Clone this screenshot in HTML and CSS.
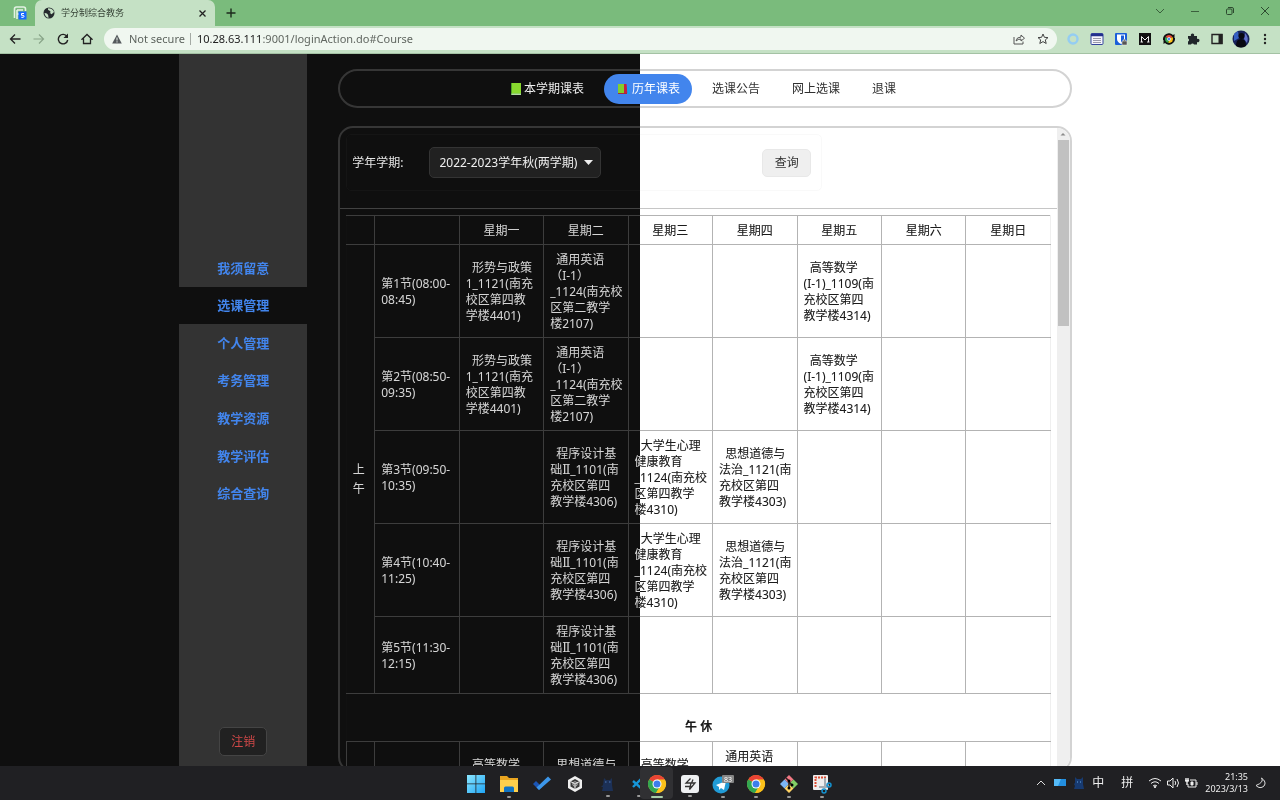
FILE: index.html
```html
<!DOCTYPE html>
<html lang="zh-CN">
<head>
<meta charset="utf-8">
<title>学分制综合教务</title>
<link rel="stylesheet" href="styles.css">
</head>
<body>
<header class="browser">
  <div class="tabstrip">
    <svg class="tab-group" width="14" height="14" viewBox="0 0 14 14"><path d="M1.500 12V3q0-2 2-2h7q2 0 2 2v2M4 4h6M4 4v9M4 8h3" fill="none" stroke="#e3f2e3" stroke-width="1.600"/><rect x="5.500" y="5.500" width="8" height="8" fill="#1769ff"/><path d="M11 7.500H8.500v1.800H10q1 0 1 1t-1 1H8.300" fill="none" stroke="#fff"/></svg>
    <div class="tab">
      <svg width="12" height="12" viewBox="0 0 12 12"><circle cx="6" cy="6" r="5.500" fill="#252a2e"/><path d="M1.500 6q2 0 3 1t1 4Q2 10 1.500 6M5 1.200q-.5 2 1 2.300T7.500 5 6 6q2 0 2 1t3-2Q10 1.500 5 1.200" fill="#c6e2c6"/></svg>
      <span class="tab-title">学分制综合教务</span>
      <button class="icon-btn" aria-label="Close tab"><svg width="9" height="9" viewBox="0 0 9 9"><path d="M1.500 1.500l6 6m0-6l-6 6" stroke="#222" stroke-width="1.300"/></svg></button>
    </div>
    <button class="icon-btn new-tab" aria-label="New tab"><svg width="10" height="10" viewBox="0 0 10 10"><path d="M5 .5v9M.5 5h9" stroke="#1c2a1c" stroke-width="1.400"/></svg></button>
    <div class="win-controls">
      <button class="icon-btn" aria-label="Search tabs"><svg width="10" height="10" viewBox="0 0 10 10"><path d="M1 3l4 4 4-4" fill="none" stroke="#3b5f3d"/></svg></button>
      <button class="icon-btn" aria-label="Minimize"><svg width="10" height="10" viewBox="0 0 10 10"><path d="M1 5.500h8" stroke="#3b5f3d"/></svg></button>
      <button class="icon-btn" aria-label="Restore"><svg width="10" height="10" viewBox="0 0 10 10"><rect x="1.500" y="3" width="5.500" height="5.500" rx="1" fill="none" stroke="#2d4a2f"/><path d="M3 1.500h4q1.500 0 1.500 1.500v4" fill="none" stroke="#2d4a2f"/></svg></button>
      <button class="icon-btn" aria-label="Close"><svg width="10" height="10" viewBox="0 0 10 10"><path d="M1 1l8 8m0-8L1 9" stroke="#2d4a2f"/></svg></button>
    </div>
  </div>
  <div class="toolbar">
    <div class="nav-buttons">
      <button class="icon-btn" aria-label="Back"><svg width="12" height="12" viewBox="0 0 12 12"><path d="M11.500 6H1.500M6 1.500L1.500 6 6 10.500" fill="none" stroke="#222" stroke-width="1.300"/></svg></button>
      <button class="icon-btn" aria-label="Forward"><svg width="12" height="12" viewBox="0 0 12 12"><path d="M.5 6h10M6 1.500L10.500 6 6 10.500" fill="none" stroke="#88a488" stroke-width="1.200"/></svg></button>
      <button class="icon-btn" aria-label="Reload"><svg width="12" height="12" viewBox="0 0 12 12"><path d="M10 3.500A4.700 4.700 0 1 0 10.700 7" fill="none" stroke="#222" stroke-width="1.400"/><path d="M11 .5V5H6.500z" fill="#222"/></svg></button>
      <button class="icon-btn" aria-label="Home"><svg width="12" height="12" viewBox="0 0 12 12"><path d="M1 6.200L6 1.500l5 4.700H9.500v4.300h-7V6.200z" fill="none" stroke="#222" stroke-width="1.300"/></svg></button>
    </div>
    <div class="address">
      <svg width="10" height="10" viewBox="0 0 10 10"><path d="M5 .5L9.800 9.500H.2z" fill="#54595c"/><path d="M5 3.500v3M5 7.300v1.200" stroke="#f0f7f0"/></svg>
      <span class="secure">Not secure</span>
      <span class="url">10.28.63.111<span>:9001/loginAction.do#Course</span></span>
      <button class="icon-btn" aria-label="Share"><svg width="12" height="12" viewBox="0 0 12 12"><path d="M1 4v7h9V8.500M3 8q.5-4 5-4V2l3.500 3.200L8 8V6Q5 6 3 8z" fill="none" stroke="#555"/></svg></button>
      <button class="icon-btn" aria-label="Bookmark"><svg width="12" height="12" viewBox="0 0 12 12"><path d="M6 1l1.400 3.300 3.600.3-2.700 2.300.9 3.600L6 8.600l-3.200 1.900.9-3.600L1 4.600l3.600-.3z" fill="none" stroke="#444"/></svg></button>
    </div>
    <div class="extensions">
      <svg width="14" height="14" viewBox="0 0 14 14"><circle cx="7" cy="7" r="4.500" fill="none" stroke="#94cdf2" stroke-width="2.400"/></svg>
      <svg width="14" height="14" viewBox="0 0 14 14"><rect x="1" y="1.500" width="12" height="11" rx="1" fill="#f5f5fc" stroke="#35459d"/><path d="M1 3h12" stroke="#23308d" stroke-width="2.500"/><path d="M3 6.500h8M3 8.500h8M3 10.500h8" stroke="#99a"/></svg>
      <svg width="14" height="14" viewBox="0 0 14 14"><rect x="1" y="1" width="12" height="12" rx="1" fill="#1b5fd9"/><path d="M3 2.500h8V7q0 3-4 5-4-2-4-5z" fill="#fff"/><path d="M7 3.500h3V7q0 2-3 3.500z" fill="#1b5fd9"/><path d="M8 9h5v4H8zM9.200 9V8q1.300-1.500 2.600 0v1" fill="#555" stroke="#eee" stroke-width=".5"/></svg>
      <svg width="14" height="14" viewBox="0 0 14 14"><rect x="1" y="1" width="12" height="12" fill="#111"/><path d="M3.500 10V4.500L7 8l3.500-3.500V10M2.500 10h2.500M9 10h2.500" fill="none" stroke="#eee"/></svg>
      <svg width="14" height="14" viewBox="0 0 14 14"><path d="M1 8a6 6 0 0 1 10-5l1.500-1V7M13 6a6 6 0 0 1-10 5l-1.500 1V7" fill="#111"/><circle cx="7" cy="7" r="5.200" fill="#111"/><path d="M7 7L3.500 5a4 4 0 0 1 7 0z" fill="#e84537"/><path d="M7 7L3.500 5A4 4 0 0 0 6.500 11z" fill="#35a852"/><path d="M7 7l3.500-2a4 4 0 0 1-4 6z" fill="#fbc116"/><circle cx="7" cy="7" r="1.600" fill="#4285f4" stroke="#fff" stroke-width=".6"/></svg>
      <svg width="14" height="14" viewBox="0 0 14 14"><path d="M2 4h3a1.700 1.700 0 1 1 3 0h3v3a1.700 1.700 0 1 1 0 3v2.500H8a1.600 1.600 0 0 0-3 0H2v-3a1.600 1.600 0 0 0 0-3z" fill="#20262a"/></svg>
      <svg width="14" height="14" viewBox="0 0 14 14"><path d="M2 2.500h10v9H2z" fill="none" stroke="#222" stroke-width="1.400"/><path d="M8.500 2h4v10h-4z" fill="#222"/></svg>
      <svg width="18" height="18" viewBox="0 0 18 18"><circle cx="9" cy="9" r="8.500" fill="#172258"/><path d="M2 4l4-3 1 7-5 3z" fill="#355fc1"/><path d="M13 3q4 4 2 10l-3-4z" fill="#6272c9"/><circle cx="9.500" cy="6" r="3" fill="#080912"/><path d="M4 16q0-7 5-7t5 7q-5 3-10 0" fill="#080912"/></svg>
      <svg width="14" height="14" viewBox="0 0 14 14" fill="#222"><circle cx="7" cy="3" r="1.200"/><circle cx="7" cy="7" r="1.200"/><circle cx="7" cy="11" r="1.200"/></svg>
    </div>
  </div>
</header>

<div class="page">
  <aside class="sidebar">
    <nav class="menu">
      <a href="#notice">我须留意</a>
      <a href="#Course" class="current">选课管理</a>
      <a href="#personal">个人管理</a>
      <a href="#exam">考务管理</a>
      <a href="#resources">教学资源</a>
      <a href="#evaluate">教学评估</a>
      <a href="#query">综合查询</a>
    </nav>
    <button class="logout">注销</button>
  </aside>
  <main class="main">
    <nav class="pills">
      <a href="#now" class="on-dark"><svg width="12" height="12" viewBox="0 0 12 12"><path d="M1 0h10v12H1z" fill="#4ca328"/><path d="M2 0h9v10.500H2z" fill="#88d92e"/><path d="M1.500 11.200H11" stroke="#e2f4dd"/></svg>本学期课表</a>
      <a href="#history" class="active"><svg width="12" height="12" viewBox="0 0 12 12"><path d="M0 1h6v9H0z" fill="#83cf2c"/><path d="M6 1h2.500l1 9H6z" fill="#c42040"/><path d="M9 4l2-.5 1 7.500h-2.500z" fill="#12a2ed"/><path d="M0 10.500h9" stroke="#a82b35"/></svg>历年课表</a>
      <a href="#bulletin">选课公告</a>
      <a href="#select">网上选课</a>
      <a href="#drop">退课</a>
    </nav>
    <section class="panel">
      <div class="content">
        <form class="filter">
          <label for="term">学年学期:</label>
          <select id="term"><option>2022-2023学年秋(两学期)</option></select>
          <button type="button" class="search">查询</button>
        </form>
        <div class="table-wrap">
        <table class="timetable">
          <colgroup><col class="c-part"><col><col><col><col><col><col><col><col></colgroup>
          <tr class="head"><th></th><th></th><th>星期一</th><th>星期二</th><th>星期三</th><th>星期四</th><th>星期五</th><th>星期六</th><th>星期日</th></tr>
          <tr><td rowspan="5" class="part">上<br>午</td><td>第1节(08:00-<br>08:45)</td><td>&nbsp; 形势与政策<br>1_1121(南充<br>校区第四教<br>学楼4401)</td><td>&nbsp; 通用英语<br>（I-1）<br>_1124(南充校<br>区第二教学<br>楼2107)</td><td></td><td></td><td>&nbsp; 高等数学<br>(I-1)_1109(南<br>充校区第四<br>教学楼4314)</td><td></td><td></td></tr>
          <tr><td>第2节(08:50-<br>09:35)</td><td>&nbsp; 形势与政策<br>1_1121(南充<br>校区第四教<br>学楼4401)</td><td>&nbsp; 通用英语<br>（I-1）<br>_1124(南充校<br>区第二教学<br>楼2107)</td><td></td><td></td><td>&nbsp; 高等数学<br>(I-1)_1109(南<br>充校区第四<br>教学楼4314)</td><td></td><td></td></tr>
          <tr><td>第3节(09:50-<br>10:35)</td><td></td><td>&nbsp; 程序设计基<br>础<span class="numeral">Ⅱ</span>_1101(南<br>充校区第四<br>教学楼4306)</td><td>&nbsp; 大学生心理<br>健康教育<br>_1124(南充校<br>区第四教学<br>楼4310)</td><td>&nbsp; 思想道德与<br>法治_1121(南<br>充校区第四<br>教学楼4303)</td><td></td><td></td><td></td></tr>
          <tr><td>第4节(10:40-<br>11:25)</td><td></td><td>&nbsp; 程序设计基<br>础<span class="numeral">Ⅱ</span>_1101(南<br>充校区第四<br>教学楼4306)</td><td>&nbsp; 大学生心理<br>健康教育<br>_1124(南充校<br>区第四教学<br>楼4310)</td><td>&nbsp; 思想道德与<br>法治_1121(南<br>充校区第四<br>教学楼4303)</td><td></td><td></td><td></td></tr>
          <tr><td>第5节(11:30-<br>12:15)</td><td></td><td>&nbsp; 程序设计基<br>础<span class="numeral">Ⅱ</span>_1101(南<br>充校区第四<br>教学楼4306)</td><td></td><td></td><td></td><td></td><td></td></tr>
          <tr class="break"><td colspan="9">午 休</td></tr>
          <tr><td></td><td></td><td>&nbsp; 高等数学<br>(I-1)_1109(南<br>充校区第四<br>教学楼4314)</td><td>&nbsp; 思想道德与<br>法治_1121(南<br>充校区第四<br>教学楼4303)</td><td>&nbsp; 高等数学<br>(I-1)_1109(南<br>充校区第四<br>教学楼4314)</td><td>&nbsp; 通用英语<br>（I-1）<br>_1124(南充校<br>区第二教学<br>楼2107)</td><td></td><td></td><td></td></tr>
        </table>
        </div>
      </div>
      <div class="scrollbar"><svg width="12" height="12" viewBox="0 0 12 12"><path d="M3.500 7.500L6 5l2.500 2.500z" fill="#8b8b8b"/></svg><div class="thumb"></div></div>
    </section>
  </main>
</div>

<footer class="taskbar">
  <div class="apps">
    <span class="app"><svg width="18" height="18" viewBox="0 0 18 18"><defs><linearGradient id="w" x2="1" y2="1"><stop stop-color="#8be7ff"/><stop offset="1" stop-color="#1fa5f5"/></linearGradient></defs><path d="M0 0h8.500v8.500H0zM9.300 0H18v8.500H9.300zM0 9.300h8.500V18H0zM9.300 9.300H18V18H9.300z" fill="url(#w)"/></svg></span>
    <span class="app running"><svg width="20" height="20" viewBox="0 0 20 20"><path d="M1 2h7l2 2h9v14H1z" fill="#e9a520"/><path d="M1 6h18v12H1z" fill="#ffd04c"/><path d="M5 18v-4q0-1.500 1.500-1.500h7q1.500 0 1.500 1.500v4z" fill="#1275c5"/></svg></span>
    <span class="app"><svg width="20" height="20" viewBox="0 0 20 20"><path d="M1 10l3-3 6 6-3 3z" fill="#1b55b5"/><path d="M7 16L4.500 13.500 16 2.500l3 3z" fill="#3c96e9"/></svg></span>
    <span class="app"><svg width="18" height="18" viewBox="0 0 18 18"><path d="M9 1l7 4v8l-7 4-7-4V5z" fill="#eee"/><path d="M9 4l4.500 2.500v5L9 14l-4.500-2.500v-5z" fill="#3a3a3a"/><path d="M9 9l4.500-2.500M9 9v5M9 9L4.500 6.500" stroke="#eee"/><circle cx="9" cy="9" r="2.200" fill="none" stroke="#ddd" stroke-width=".8"/></svg></span>
    <span class="app running"><svg width="18" height="18" viewBox="0 0 18 18"><path d="M5 3l2 2h4l2-2v7l1 6H3l1-4H2l2-2z" fill="#1c3056"/><path d="M6 7h1.500M10 7h1.500" stroke="#4c79ba"/></svg></span>
    <span class="app running half"><svg width="9" height="18" viewBox="0 0 9 18"><path d="M1 6l8 7M1 12l8-8" fill="none" stroke="#1696d8" stroke-width="2.400"/></svg></span>
    <span class="app running active"><svg width="20" height="20" viewBox="0 0 20 20"><use href="#chrome"/></svg></span>
    <span class="app running"><svg width="18" height="18" viewBox="0 0 18 18"><rect width="18" height="18" rx="3" fill="#eef0f2"/><path d="M9.500 3.500L5 8h3M4 11.500h6.500M8 8h2L8.500 14.500 14 8h-3.500L12 4.500" fill="none" stroke="#333" stroke-width="1.300"/></svg></span>
    <span class="app running"><svg width="22" height="20" viewBox="0 0 22 20"><circle cx="9" cy="11" r="8.500" fill="#219bd6"/><path d="M4 11l10-4-2 9-3-2-2 2v-3z" fill="#fff"/><rect x="10" y="1" width="12" height="8" rx="1" fill="#858585"/><text x="12" y="8" class="badge-text">83</text></svg></span>
    <span class="app running"><svg width="20" height="20" viewBox="0 0 20 20"><defs><g id="chrome"><circle cx="10" cy="10" r="9" fill="#fbc11a"/><path d="M10 10L2.200 5.500a9 9 0 0 1 15.600 0z" fill="#e94334"/><path d="M10 10L2.200 5.500A9 9 0 0 0 9 19l4.500-7.500z" fill="#31a751"/><path d="M10 10V5.500h7.800A9 9 0 0 1 9 19l4.500-7z" fill="#fbc11a"/><circle cx="10" cy="10" r="4.500" fill="#fff"/><circle cx="10" cy="10" r="3.500" fill="#3d7eea"/></g></defs><use href="#chrome"/></svg></span>
    <span class="app running"><svg width="20" height="20" viewBox="0 0 20 20"><path d="M10 1l4.500 4.500L10 10 5.500 5.500z" fill="#f27884"/><path d="M5.500 5.500L10 10l-4.500 4.500L1 10z" fill="#7cb5f3"/><path d="M14.500 5.500L19 10l-4.500 4.500L10 10z" fill="#82cf65"/><path d="M10 10l4.500 4.500L10 19l-4.500-4.500z" fill="#ffd262"/><path d="M7 4l3 3v8M10 8l3 3" fill="none" stroke="#2a2020" stroke-width="1.500"/><circle cx="10" cy="7" r="1.500"/><circle cx="10" cy="14" r="1.500"/><circle cx="13" cy="11" r="1.500"/></svg></span>
    <span class="app running"><svg width="20" height="20" viewBox="0 0 20 20"><rect x="1" y="1" width="15" height="15" rx="1" fill="#eee"/><path d="M3.500 13V3.500H13V9" fill="none" stroke="#dc4e35" stroke-width="2" stroke-dasharray="2 1"/><path d="M13 4v9l4-2M7 13h9" fill="none" stroke="#a5acb2" stroke-width="2"/><circle cx="17" cy="11" r="2" fill="none" stroke="#1492d0" stroke-width="1.500"/><circle cx="12" cy="17" r="2" fill="none" stroke="#1492d0" stroke-width="1.500"/></svg></span>
  </div>
  <div class="tray">
    <svg width="12" height="12" viewBox="0 0 12 12"><path d="M2 8l4-4 4 4" fill="none" stroke="#ddd"/></svg>
    <svg width="12" height="12" viewBox="0 0 12 12"><path d="M0 2h12v7H0z" fill="#238fe0"/><path d="M0 2h7L4 9H0z" fill="#55baf7"/></svg>
    <svg width="12" height="12" viewBox="0 0 12 12"><path d="M2 0l2 2h4l2-2v7l1 5H1l1-3-1-2 1-1z" fill="#173a70"/><path d="M4 5h1M7 5h1" stroke="#67a8e8"/></svg>
    <span class="ime">中</span><span class="ime pinyin">拼</span>
    <div class="status">
      <svg width="14" height="14" viewBox="0 0 14 14" fill="none" stroke="#eee"><path d="M1 5q6-5 12 0M3 7.500q4-3.500 8 0M5 10q2-2 4 0"/><circle cx="7" cy="11" r=".7" fill="#eee"/></svg>
      <svg width="14" height="14" viewBox="0 0 14 14" fill="none" stroke="#eee"><path d="M1.500 5H4l3-3v10L4 9H1.500zM9 5q1.500 2 0 4M11 3q3 4 0 8"/></svg>
      <svg width="14" height="14" viewBox="0 0 14 14" fill="none" stroke="#eee"><path d="M6 4h6v7H4V8M13 6v3"/><path d="M7 6h2v3H7z" fill="#eee"/><path d="M1 4.500h4M2 2v3h2V2M3 5v4" stroke-width="1.400"/></svg>
    </div>
    <time class="clock">21:35<br>2023/3/13</time>
    <svg width="12" height="12" viewBox="0 0 12 12"><path d="M6.500 1q3 4-5.500 7.500 4 4 8 .5 3-4-2.500-8z" fill="none" stroke="#ddd"/></svg>
  </div>
</footer>
</body>
</html>
```
FILE: styles.css
```css
* { box-sizing: border-box; }
:root {
  --line: rgba(128, 128, 128, 0.45);
  --outline: rgba(128, 128, 128, 0.35);
  --blue: #4285ed;
  --split: linear-gradient(90deg, #0f0f0f 50%, #ffffff 50%);
}
body {
  margin: 0;
  height: 100vh;
  display: flex;
  flex-direction: column;
  overflow: hidden;
  font: 12px/16px "Noto Sans", "Noto Sans CJK SC", sans-serif;
  background: var(--split);
}
svg { display: block; flex: none; }
button, select { font: inherit; }
a { text-decoration: none; }
.icon-btn { display: flex; padding: 0; border: 0; background: none; }

/* browser chrome */
.tabstrip { height: 26px; display: flex; align-items: center; background: #7abb7c; padding: 0 10px 0 13px; }
.tab-group { margin-right: 8px; }
.tab {
  align-self: stretch; width: 180px; display: flex; align-items: center; gap: 6px;
  padding: 0 8px; background: #c5e1c5; border-radius: 7px 7px 0 0;
}
.tab-title { flex: 1; font-size: 9px; color: #344034; }
.new-tab { margin-left: 11px; }
.win-controls { display: flex; gap: 25px; margin-left: auto; margin-bottom: 4px; }
.toolbar { height: 28px; display: flex; align-items: center; background: #c5e1c5; padding: 0 8px 2px 9px; border-bottom: 1px solid #a4c2a4; }
.nav-buttons { display: flex; gap: 12px; }
.address {
  flex: 1; height: 22px; margin-left: 11px; padding: 0 8px; border-radius: 11px;
  display: flex; align-items: center; background: #f0f7f0; font-size: 11px; color: #5d645e;
}
.secure { margin-left: 7px; padding-right: 5px; border-right: 1px solid #a4aaa4; line-height: 12px; }
.url { flex: 1; margin-left: 6px; color: #222; }
.url span { color: #606660; }
.address .icon-btn + .icon-btn { margin-left: 12px; }
.extensions { display: flex; align-items: center; gap: 10px; margin-left: 9px; }
.extensions svg:nth-last-child(2) { margin: 0 -2px; }

/* page */
.page { flex: 1; min-height: 0; display: flex; overflow: hidden; padding: 0 16.25% 0 14%; }
.sidebar {
  flex: 0 0 128px; display: flex; flex-direction: column; align-items: center;
  background: #333; padding-bottom: 10px;
}
.menu { flex: none; width: 100%; height: 263px; margin-top: 195px; display: grid; grid-auto-rows: 1fr; }
.menu a {
  display: flex; align-items: center; justify-content: center;
  color: var(--blue); font-size: 13px; font-weight: bold;
}
.menu .current { background: #0f0f0f; }
.logout {
  margin-top: auto; width: 48px; height: 29px; padding: 0; border: 1px solid #444;
  border-radius: 5px; background: #212121; color: #d04848;
}
.main { flex: 1; min-width: 0; margin-left: 31px; padding-top: 15px; display: flex; flex-direction: column; gap: 18px; }
.pills {
  flex: none; height: 39px; padding-right: 4px; border: 2px solid var(--outline); border-radius: 20px;
  display: flex; align-items: center; justify-content: center;
}
.pills a { display: flex; align-items: center; height: 30px; padding: 0 16px; color: #303030; }
.pills a svg { margin-right: 2px; }
.pills .on-dark { color: #eee; }
.pills .active { margin: 0 4px; padding: 0 12px 0 14px; border-radius: 15px; background: var(--blue); color: #fff; }
.panel {
  flex: 1; min-height: 0; display: flex; overflow: hidden; margin-bottom: -6px;
  border: 2px solid var(--outline); border-radius: 15px;
}
.content { flex: 1; min-width: 0; overflow: hidden; }
.filter {
  width: 476px; height: 57px; margin: 6px 0 17px 6px; padding: 0 10px 0 5px;
  display: flex; align-items: center; border: 1px solid rgba(128, 128, 128, 0.05); border-radius: 5px;
}
.filter label { color: #e4e4e4; }
#term {
  appearance: none; width: 172px; height: 31px; margin-left: 26px; padding: 0 9px;
  border: 1px solid #343434; border-radius: 5px; color: #eee;
  background: url("data:image/svg+xml,%3Csvg xmlns='http://www.w3.org/2000/svg' width='9' height='5'%3E%3Cpath d='M0 0h9L4.500 5z' fill='%23eee'/%3E%3C/svg%3E") no-repeat right 7px center #212121;
}
.search { width: 49px; height: 28px; margin-left: auto; padding: 0; border: 1px solid #e8e8e8; border-radius: 5px; background: #efefef; color: #333; }
.table-wrap { border-top: 1px solid var(--line); padding: 6px 6px 0 6px; }

/* difference blending keeps the grid legible on both halves of the page */
.timetable {
  width: 100%; table-layout: fixed; border-collapse: collapse; color: #e4e4e4;
  mix-blend-mode: difference;
}
.c-part { width: 28px; }
.timetable th, .timetable td { border: 1px solid #4c4c4c; padding: 7px 6px 5px; text-align: left; white-space: nowrap; }
.timetable tr > :last-child { border-right-color: #101010; }
.timetable .head th { height: 29px; text-align: center; font-weight: normal; }
.timetable .head th:first-child, .timetable .part, .timetable .break td { border-left-color: #202020; }
.timetable .part { padding: 24px 8px 5px 4px; text-align: center; line-height: 19px; }
.timetable .break td { height: 48px; padding: 18px 0 0; text-align: center; font-weight: bold; }
.numeral { font-family: "DejaVu Serif", serif; line-height: 12px; }
.scrollbar { flex: 0 0 13px; background: #efefef; }
.scrollbar .thumb { width: 11px; height: 186px; margin-left: 1px; background: #c1c1c1; }

/* taskbar */
.taskbar { flex: none; position: relative; height: 34px; display: flex; align-items: center; justify-content: space-between; background: #202023; padding: 0 13px 0 459px; }
.apps { display: flex; height: 100%; align-items: center; }
.app { width: 33px; height: 32px; display: flex; flex-direction: column; align-items: center; justify-content: center; padding-top: 5px; }
.app::after { content: ""; width: 4px; height: 2px; margin-top: 2px; border-radius: 1px; }
.app.running::after { background: #999; }
.app.half { width: 20px; align-items: flex-end; padding-right: 3px; }
.app.half + .app { margin-left: -4px; }
.app.active { background: #303033; border-radius: 4px; }
.app.active::after { width: 12px; background: #a8cfa9; }
.badge-text { font: 7px "Noto Sans", sans-serif; fill: #fff; }
.tray { display: flex; align-items: center; gap: 7px; color: #eee; }
.tray .pinyin { margin-left: 10px; }
.status { display: flex; gap: 4px; margin-left: 8px; }
.clock { font-size: 9px; line-height: 12px; text-align: right; }
```
